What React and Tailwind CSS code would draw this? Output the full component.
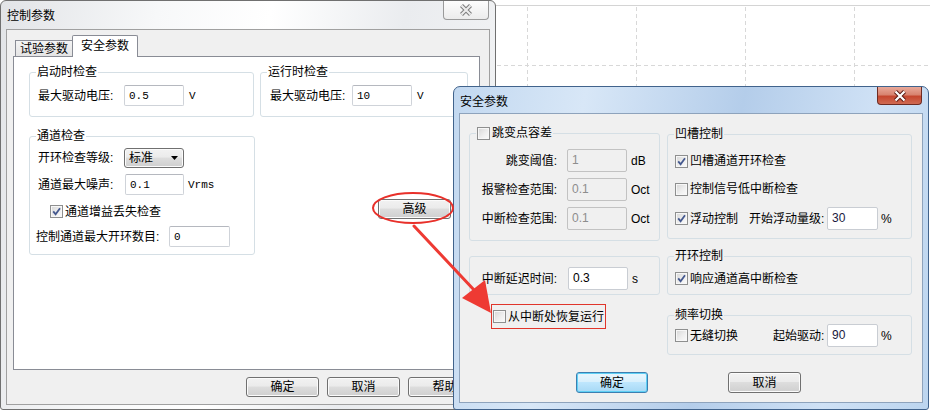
import React from 'react';

const Check = ({ checked }) => (
  <span className="flex h-[13px] w-[13px] shrink-0 items-center justify-center border border-[#8e8f8f] bg-[linear-gradient(135deg,#d6d6d6,#eeeeee_55%,#fbfbfb)] shadow-[inset_0_0_0_1px_#f7f7f7]">
    {checked && (
      <svg width="9" height="9" viewBox="0 0 9 9">
        <path d="M1.2 4.4 L3.6 7.2 L8 1.2" fill="none" stroke="#45598f" strokeWidth="1.8" />
      </svg>
    )}
  </span>
);

const Btn = ({ className, children }) => (
  <div className={`flex items-center justify-center rounded-[3px] border border-[#707070] bg-[linear-gradient(#f2f2f2,#ebebeb_45%,#dddddd_50%,#cfcfcf)] shadow-[inset_0_0_0_1px_#fbfbfb] ${className}`}>
    {children}
  </div>
);

const Group = ({ title, className, legendBg, children }) => (
  <div className={`relative shrink-0 rounded-[3px] border border-[#d5dfe5] ${className}`}>
    {title && (
      <div className={`absolute left-[6px] top-[-8px] flex h-[14px] items-center px-[1px] ${legendBg}`}>{title}</div>
    )}
    {children}
  </div>
);

const CloseGlyph = ({ fill, edge }) => (
  <svg width="14" height="12" viewBox="0 0 14 12">
    <path d="M2.5 1.5 L11.5 10.5 M11.5 1.5 L2.5 10.5" stroke={edge} strokeWidth="4.2" />
    <path d="M2.5 1.5 L11.5 10.5 M11.5 1.5 L2.5 10.5" stroke={fill} strokeWidth="2.2" />
  </svg>
);

// grid of the plot lying behind the dialogs
const GridBackdrop = () => (
  <svg className="absolute inset-0" width="930" height="412">
    <line x1="495" y1="5.5" x2="930" y2="5.5" stroke="#d4d4d4" />
    {[527.5, 636.5, 745.5, 854.5].map((x) => (
      <line key={x} x1={x} y1="7" x2={x} y2="412" stroke="#d8d8d8" strokeDasharray="4 3" />
    ))}
    <line x1="497" y1="65.5" x2="930" y2="65.5" stroke="#d8d8d8" strokeDasharray="4 3" />
  </svg>
);

const MonoField = ({ className, children }) => (
  <div className={`flex items-center rounded-[2px] border border-[#cfd3d9] border-t-[#b5b8bf] bg-white pl-[4px] font-['Liberation_Mono',monospace] text-[11px] ${className}`}>
    {children}
  </div>
);

const MainWindow = () => (
  <div className="absolute left-0 top-0 h-[410px] w-[496px] rounded-t-[6px] rounded-b-[3px] border border-[#707070] bg-[linear-gradient(100deg,#e2e4e7_0%,#f7f8f9_28%,#ffffff_48%,#eaecef_72%,#f4f5f6_100%)]">
    <div className="flex h-[28px] items-start">
      <div className="ml-[6px] mt-[8px]">控制参数</div>
      <div className="ml-auto mr-[6px] flex h-[19px] w-[46px] items-center justify-center rounded-b-[4px] border border-t-0 border-[#9a9a9a] bg-[linear-gradient(#fdfdfd,#ececec)]">
        <CloseGlyph fill="#ececec" edge="#7c7c7c" />
      </div>
    </div>
    <div className="mx-[5px] h-[376px] border border-[#a0a0a0] bg-[#f0f0f0]">
      <div className="relative z-10 -mb-px flex h-[27px] items-end pl-[8px]">
        <div className="mb-px flex h-[16px] w-[58px] items-center justify-center border border-b-0 border-[#898c95] bg-[linear-gradient(#f4f4f4,#e4e4e4)]">
          试验参数
        </div>
        <div className="-ml-px flex h-[22px] w-[66px] items-start justify-center rounded-t-[2px] border border-b-0 border-[#898c95] bg-white pt-[3px]">
          安全参数
        </div>
      </div>
      <div className="ml-[6px] h-[314px] w-[467px] border border-[#898c95] bg-white pl-[15px] pt-[15px]">
        <div className="flex gap-[6px]">
          <Group title="启动时检查" legendBg="bg-white" className="h-[45px] w-[225px]">
            <div className="mt-[12px] flex h-[21px] items-center pl-[8px]">
              <span className="w-[86px]">最大驱动电压:</span>
              <MonoField className="h-[21px] w-[60px]">0.5</MonoField>
              <span className="ml-[5px] font-['Liberation_Mono',monospace] text-[11px]">V</span>
            </div>
          </Group>
          <Group title="运行时检查" legendBg="bg-white" className="h-[45px] w-[208px]">
            <div className="mt-[12px] flex h-[21px] items-center pl-[9px]">
              <span className="w-[82px]">最大驱动电压:</span>
              <MonoField className="h-[21px] w-[60px]">10</MonoField>
              <span className="ml-[5px] font-['Liberation_Mono',monospace] text-[11px]">V</span>
            </div>
          </Group>
        </div>
        <div className="mt-[19px] flex items-start">
          <Group title="通道检查" legendBg="bg-white" className="h-[119px] w-[226px]">
            <div className="mt-[11px] flex h-[20px] items-center pl-[8px]">
              <span className="w-[86px]">开环检查等级:</span>
              <div className="flex h-[20px] w-[60px] items-center rounded-[3px] border border-[#707070] bg-[linear-gradient(#f2f2f2,#ebebeb_45%,#dddddd_50%,#cfcfcf)] pl-[4px] shadow-[inset_0_0_0_1px_#fbfbfb]">
                <span>标准</span>
                <svg className="ml-auto mr-[5px]" width="7" height="4" viewBox="0 0 7 4">
                  <path d="M0 0H7L3.5 4Z" fill="#000" />
                </svg>
              </div>
            </div>
            <div className="mt-[6px] flex h-[21px] items-center pl-[8px]">
              <span className="w-[87px]">通道最大噪声:</span>
              <MonoField className="h-[21px] w-[59px]">0.1</MonoField>
              <span className="ml-[4px] font-['Liberation_Mono',monospace] text-[11px]">Vrms</span>
            </div>
            <div className="mt-[10px] flex h-[13px] items-center pl-[20px]">
              <Check checked />
              <span className="ml-[2px]">通道增益丢失检查</span>
            </div>
            <div className="mt-[8px] flex h-[21px] items-center pl-[6px]">
              <span className="w-[133px]">控制通道最大开环数目:</span>
              <MonoField className="h-[21px] w-[61px]">0</MonoField>
            </div>
          </Group>
          <Btn className="ml-[123px] mt-[63px] h-[20px] w-[73px]">高级</Btn>
        </div>
      </div>
      <div className="mt-[7px] flex gap-[8px] pl-[239px]">
        <Btn className="h-[20px] w-[73px]">确定</Btn>
        <Btn className="h-[20px] w-[73px]">取消</Btn>
        <Btn className="h-[20px] w-[73px]">帮助</Btn>
      </div>
    </div>
  </div>
);

const ValueRow = ({ label, value, unit, disabled, gap }) => (
  <div className="flex h-[23px] items-center">
    <span className="w-[87px] text-right">{label}</span>
    <div
      className={`flex h-[23px] w-[60px] items-start rounded-[2px] border pl-[4px] pt-[3px] ${gap} ${
        disabled ? 'border-[#c2c2c2] bg-[#f0f0f0] text-[#8d8d8d]' : 'border-[#c9cdd3] bg-white'
      }`}
    >
      {value}
    </div>
    <span className="ml-[4px]">{unit}</span>
  </div>
);

const SmallField = ({ children }) => (
  <div className="flex h-[23px] w-[51px] items-start rounded-[2px] border border-[#c9cdd3] bg-white pl-[4px] pt-[3px] text-[#1a1a40]">
    {children}
  </div>
);

const SafetyDialog = () => (
  <div className="absolute left-[453px] top-[86px] z-10 h-[324px] w-[476px] rounded-t-[7px] rounded-b-[3px] border border-[#41638c] bg-[linear-gradient(100deg,#c2d8f0_0%,#d8e7f7_25%,#b4cdea_55%,#cfe1f5_80%,#bcd5ef_100%)]">
    <div className="flex h-[26px] items-start">
      <div className="ml-[6px] mt-[8px]">安全参数</div>
      <div className="ml-auto mr-[6px] flex h-[18px] w-[45px] items-center justify-center rounded-b-[4px] border border-t-0 border-[#6e2b22] bg-[linear-gradient(#e9a99a,#d88470_45%,#c5472f_55%,#d06a52)]">
        <CloseGlyph fill="#ffffff" edge="#5a1c14" />
      </div>
    </div>
    <div className="mx-[5px] flex h-[290px] flex-col border border-[#8ea3bc] bg-[#f0f0f0]">
      <div className="flex gap-[7px] pl-[9px] pt-[19px]">
        <div className="flex w-[191px] flex-col items-start">
          <Group
            legendBg="bg-[#f0f0f0]"
            className="h-[108px] w-[191px]"
            title={
              <>
                <Check />
                <span className="ml-[2px]">跳变点容差</span>
              </>
            }
          >
            <div className="mt-[15px] flex flex-col gap-[6px]">
              <ValueRow label="跳变阈值:" value="1" unit="dB" disabled gap="ml-[10px]" />
              <ValueRow label="报警检查范围:" value="0.1" unit="Oct" disabled gap="ml-[10px]" />
              <ValueRow label="中断检查范围:" value="0.1" unit="Oct" disabled gap="ml-[10px]" />
            </div>
          </Group>
          <Group className="mt-[15px] h-[39px] w-[191px]">
            <div className="mt-[10px]">
              <ValueRow label="中断延迟时间:" value="0.3" unit="s" gap="ml-[11px]" />
            </div>
          </Group>
          <div className="ml-[22px] mt-[9px] flex h-[25px] w-[115px] items-center border border-[#e0352b] pl-[1px]">
            <Check />
            <span className="ml-[2px]">从中断处恢复运行</span>
          </div>
        </div>
        <div className="flex w-[245px] flex-col">
          <Group title="凹槽控制" legendBg="bg-[#f0f0f0]" className="mt-px h-[105px] w-[245px]">
            <div className="pl-[7px]">
              <div className="mt-[16px] flex h-[20px] items-center">
                <Check checked />
                <span className="ml-[2px]">凹槽通道开环检查</span>
              </div>
              <div className="mt-[8px] flex h-[20px] items-center">
                <Check />
                <span className="ml-[2px]">控制信号低中断检查</span>
              </div>
              <div className="mt-[8px] flex h-[23px] items-center">
                <Check checked />
                <span className="ml-[2px] w-[59px]">浮动控制</span>
                <span className="w-[78px]">开始浮动量级:</span>
                <SmallField>30</SmallField>
                <span className="ml-[3px]">%</span>
              </div>
            </div>
          </Group>
          <Group title="开环控制" legendBg="bg-[#f0f0f0]" className="mt-[17px] h-[39px] w-[245px]">
            <div className="mt-[11px] flex h-[21px] items-center pl-[7px]">
              <Check checked />
              <span className="ml-[2px]">响应通道高中断检查</span>
            </div>
          </Group>
          <Group title="频率切换" legendBg="bg-[#f0f0f0]" className="mt-[20px] h-[40px] w-[245px]">
            <div className="mt-[8px] flex h-[23px] items-center pl-[7px]">
              <Check />
              <span className="ml-[2px] w-[83px]">无缝切换</span>
              <span className="w-[54px]">起始驱动:</span>
              <SmallField>90</SmallField>
              <span className="ml-[3px]">%</span>
            </div>
          </Group>
        </div>
      </div>
      <div className="mb-[9px] mt-auto flex gap-[80px] pl-[116px]">
        <div className="flex h-[21px] w-[72px] items-center justify-center rounded-[3px] border border-[#3c7fb1] bg-[linear-gradient(#eaf6fd,#d9f0fc_45%,#bee6fd_50%,#a7d9f5)] shadow-[inset_0_0_0_1px_#5fd0f5]">
          确定
        </div>
        <Btn className="h-[21px] w-[73px]">取消</Btn>
      </div>
    </div>
  </div>
);

// red markup drawn over the screenshot
const Annotations = () => (
  <svg className="pointer-events-none absolute inset-0 z-20" width="930" height="412">
    <ellipse cx="413" cy="208" rx="40" ry="15" fill="none" stroke="#e8302a" strokeWidth="2" />
    <path d="M414 226 L475 291" stroke="#ee3a33" strokeWidth="3" strokeLinecap="round" />
    <polygon points="491,313 462,298 485,280" fill="#ee3a33" />
  </svg>
);

export default function App() {
  return (
    <div className="relative h-[412px] w-[930px] overflow-hidden bg-white font-['Liberation_Sans','Noto_Sans_CJK_SC',sans-serif] text-[12px] leading-[14px] text-black">
      <GridBackdrop />
      <MainWindow />
      <SafetyDialog />
      <Annotations />
    </div>
  );
}
